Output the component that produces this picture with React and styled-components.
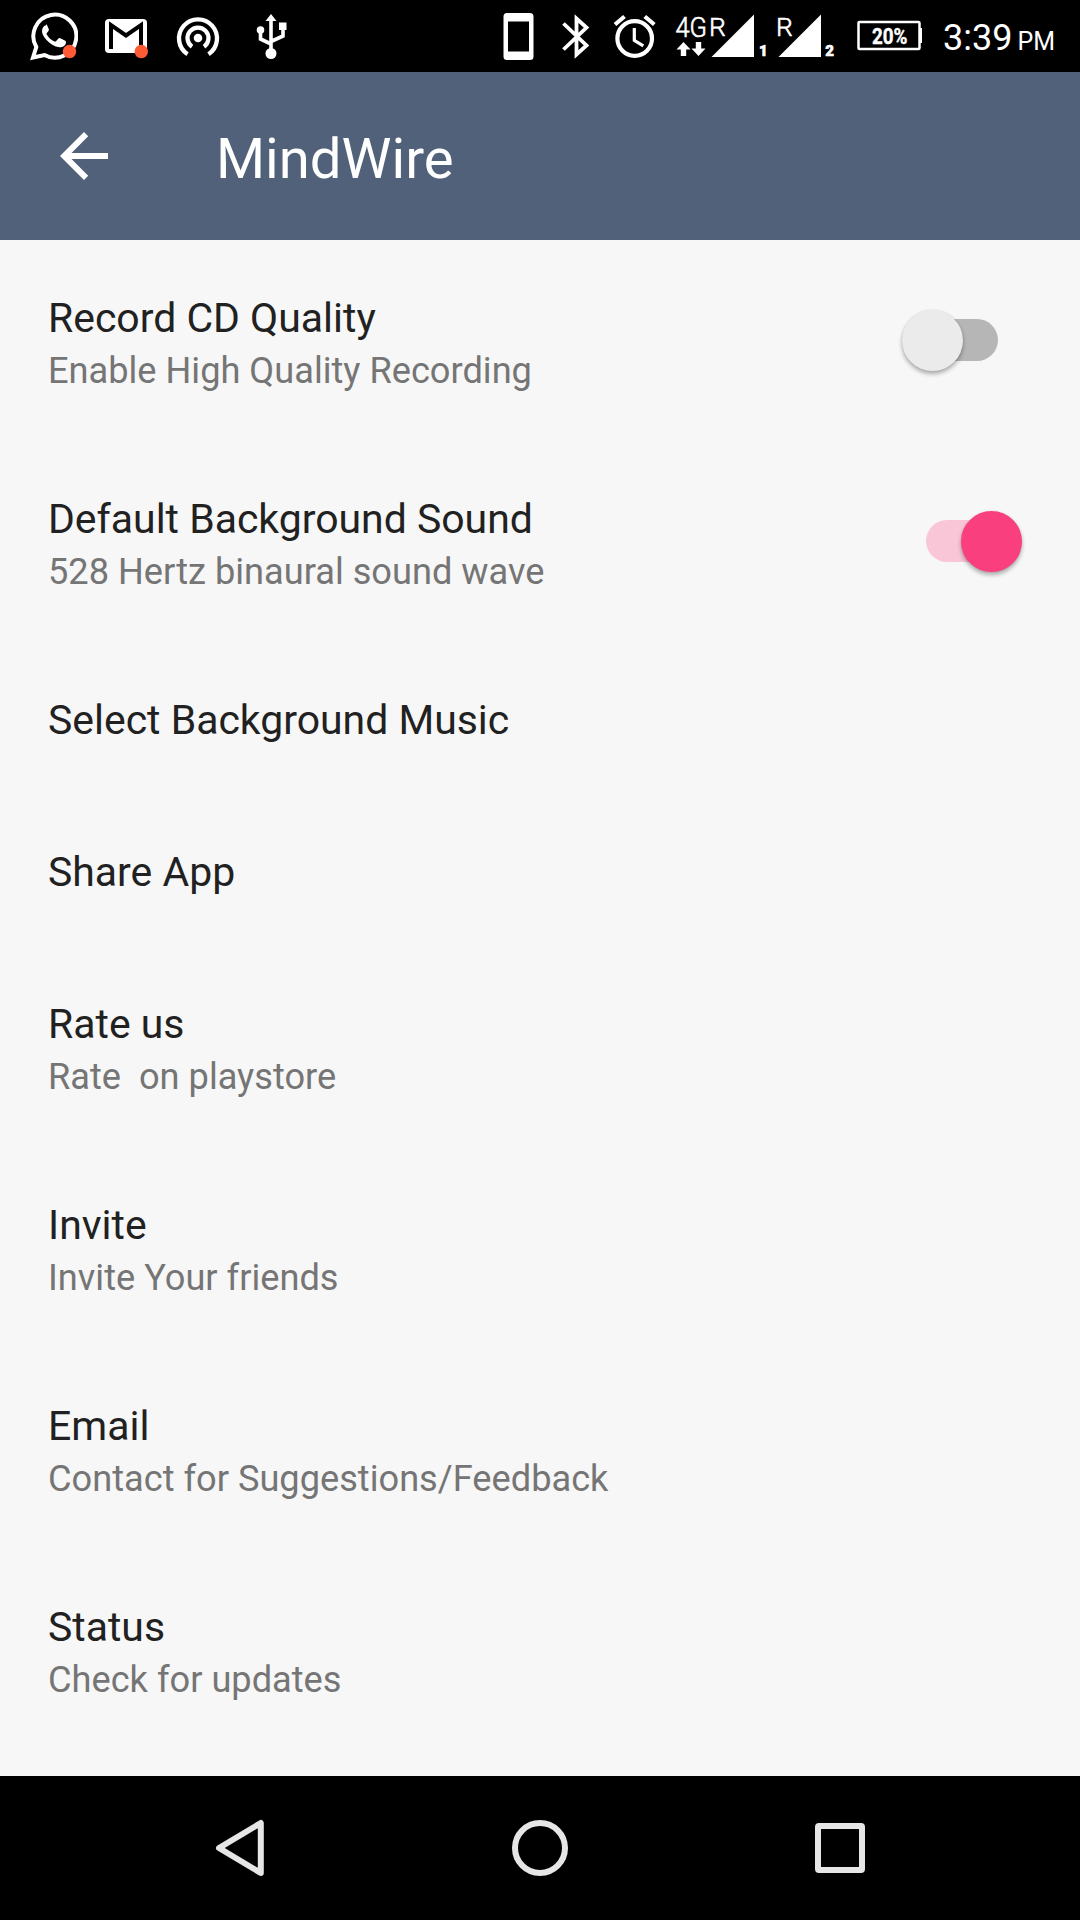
import { useState } from 'react';
import styled, { createGlobalStyle } from 'styled-components';

const GlobalStyle = createGlobalStyle`
  * {
    box-sizing: border-box;
  }

  body {
    margin: 0;
    background-color: #000;
    font-family: Roboto, 'Noto Sans', sans-serif;
  }
`;

const Screen = styled.div`
  width: 1080px;
  height: 1920px;
  display: flex;
  flex-direction: column;
  background-color: #f7f7f7;
  overflow: hidden;
`;

const StatusBar = styled.div`
  height: 72px;
  flex-shrink: 0;
  display: flex;
  align-items: center;
  justify-content: space-between;
  padding: 0 25px 0 28px;
  background-color: #000;
  color: #fff;
`;

const StatusGroup = styled.div`
  display: flex;
  align-items: center;
`;

const StatusIcon = styled.svg`
  display: block;
  width: ${(props) => props.$width}px;
  height: 72px;
  margin-right: ${(props) => props.$gap || 0}px;
`;

const Clock = styled.div`
  display: flex;
  align-items: baseline;
  justify-content: flex-end;
  gap: 5px;
  width: 113px;
  font-size: 36px;
  line-height: 44px;
  padding-top: 7px;
  white-space: nowrap;
`;

const Meridiem = styled.span`
  font-size: 25px;
`;

const AppBar = styled.header`
  height: 168px;
  flex-shrink: 0;
  display: flex;
  align-items: center;
  padding-left: 48px;
  background-color: #516179;
  color: #fff;
`;

const BackButton = styled.button`
  width: 72px;
  height: 72px;
  margin-right: 96px;
  padding: 0;
  border: none;
  background: none;
  cursor: pointer;
`;

const AppTitle = styled.h1`
  margin: 0;
  padding-top: 6px;
  font-size: 56.25px;
  font-weight: 400;
  line-height: 66px;
`;

const SettingsList = styled.main`
  flex: 1;
  display: flex;
  flex-direction: column;
`;

const SettingRow = styled.div`
  display: flex;
  align-items: center;
  justify-content: space-between;
  padding-right: 58px;
`;

const SettingText = styled.div`
  padding: 50px 0 46px 48px;
`;

const SettingTitle = styled.div`
  font-size: 40.95px;
  line-height: 56px;
  color: #212121;
`;

const SettingSummary = styled.div`
  font-size: 36.2px;
  line-height: 49px;
  color: #757575;
  white-space: pre;
`;

const Switch = styled.button`
  width: 120px;
  height: 60px;
  margin-bottom: 1px;
  display: flex;
  align-items: center;
  justify-content: center;
  position: relative;
  padding: 0;
  border: none;
  background: none;
  cursor: pointer;
`;

const SwitchTrack = styled.span`
  width: 72px;
  height: 42px;
  border-radius: 21px;
  background-color: ${(props) => (props.$on ? '#f9c6d8' : '#b6b6b6')};
`;

const SwitchThumb = styled.span`
  position: absolute;
  top: 0;
  left: ${(props) => (props.$on ? '59px' : '0')};
  width: 61px;
  height: 61px;
  border-radius: 50%;
  background-color: ${(props) => (props.$on ? '#fa3f7f' : '#ebebeb')};
  box-shadow: 0 3px 4px rgba(0, 0, 0, 0.3), 0 0 2px rgba(0, 0, 0, 0.1);
`;

const NavBar = styled.nav`
  height: 144px;
  flex-shrink: 0;
  display: flex;
  align-items: center;
  justify-content: center;
  gap: 210px;
  background-color: #000;
`;

const NavButton = styled.button`
  width: 90px;
  height: 90px;
  padding: 0;
  border: none;
  background: none;
  cursor: pointer;
`;

const SETTINGS = [
  { id: 'quality', title: 'Record CD Quality', summary: 'Enable High Quality Recording', toggle: true },
  { id: 'sound', title: 'Default Background Sound', summary: '528 Hertz binaural sound wave', toggle: true },
  { id: 'music', title: 'Select Background Music' },
  { id: 'share', title: 'Share App' },
  { id: 'rate', title: 'Rate us', summary: 'Rate  on playstore' },
  { id: 'invite', title: 'Invite', summary: 'Invite Your friends' },
  { id: 'email', title: 'Email', summary: 'Contact for Suggestions/Feedback' },
  { id: 'status', title: 'Status', summary: 'Check for updates' },
];

function WhatsAppIcon() {
  return (
    <StatusIcon $width={50} $gap={25} viewBox="28 0 50 72">
      <path d="M33 57.500l3.300-10.500a21.500 21.500 0 1 1 8.200 8z" fill="none" stroke="#fff" strokeWidth="4" />
      <path
        d="M46 25.200c-2 .4-4 2.600-4 5.800 0 3 1.600 5.600 4.300 8.700 3.600 4 8.100 7 13 7.500 3.500.2 6.500-1.700 6.700-4.800 0-1-.3-1.300-1.200-1.800l-4.500-2.300c-1-.5-1.500-.3-2.100.4l-2 2.400c-.5.6-1 .6-1.700.3-3.200-1.400-6-3.900-7.700-7-.4-.7-.2-1.200.3-1.700l1.500-1.900c.4-.5.4-1 .2-1.600l-2-4.700c-.2-.5-.5.500-.8.700z"
        fill="#fff"
      />
      <circle cx="69.500" cy="51.500" r="6.700" fill="#ff5a36" />
    </StatusIcon>
  );
}

function GmailIcon() {
  return (
    <StatusIcon $width={45} $gap={27} viewBox="103 0 45 72">
      <rect x="105" y="19" width="42" height="34" rx="4" fill="#fff" />
      <path d="M111 49V25l15 10.500L141 25v24" fill="none" stroke="#000" strokeWidth="4" />
      <circle cx="141.300" cy="51.500" r="6.700" fill="#ff5a36" />
    </StatusIcon>
  );
}

function HotspotIcon() {
  return (
    <StatusIcon $width={46} $gap={32} viewBox="175 0 46 72">
      <g fill="none" stroke="#fff" strokeWidth="4.300">
        <path d="M187.500 54.200a19 19 0 1 1 21 0" />
        <path d="M192 46.700a10.500 10.500 0 1 1 12 0" />
      </g>
      <circle cx="198" cy="38" r="4.300" fill="#fff" />
    </StatusIcon>
  );
}

function UsbIcon() {
  return (
    <StatusIcon $width={36} viewBox="253 0 36 72">
      <path d="M271 53V19M271 44l-10.500-5v-9M271 41.500l12-5.500v-9" fill="none" stroke="#fff" strokeWidth="3.600" />
      <path d="M271 14l5.500 7h-11zM279 22.500h7.500v7.500H279z" fill="#fff" />
      <circle cx="260.500" cy="30" r="3.800" fill="#fff" />
      <circle cx="271" cy="53.500" r="5.500" fill="#fff" />
    </StatusIcon>
  );
}

function PhoneIcon() {
  return (
    <StatusIcon $width={32} $gap={26} viewBox="503 0 32 72">
      <path
        fillRule="evenodd"
        d="M507 13h23q3.500 0 3.500 3.500v40q0 3.500-3.500 3.500h-23q-3.500 0-3.500-3.500v-40q0-3.500 3.500-3.500zM508 21.500v30h21v-30z"
        fill="#fff"
      />
    </StatusIcon>
  );
}

function BluetoothIcon() {
  return (
    <StatusIcon $width={30} $gap={21} viewBox="561 0 30 72">
      <path d="M563.500 23.500l23 22-10 9V18.500l10 9-23 22" fill="none" stroke="#fff" strokeWidth="3.800" />
    </StatusIcon>
  );
}

function AlarmIcon() {
  return (
    <StatusIcon $width={46} $gap={17} viewBox="612 0 46 72">
      <g fill="none" stroke="#fff">
        <circle cx="634.700" cy="38.500" r="17.300" strokeWidth="4.200" />
        <path d="M634.300 28v12.300l9 5.500" strokeWidth="3.200" />
        <path d="M615 24.500l9.500-8M654.300 24.500l-9.500-8" strokeWidth="4.200" />
      </g>
    </StatusIcon>
  );
}

function SignalIcons() {
  return (
    <StatusIcon $width={162} $gap={20} viewBox="675 0 162 72">
      <g fill="#fff" stroke="#fff" strokeWidth="0.600" fontFamily="Roboto, sans-serif" fontWeight="300">
        <text x="675.500" y="37.300" fontSize="27" textLength="31.500" lengthAdjust="spacingAndGlyphs">4G</text>
        <text x="708.900" y="35.900" fontSize="26.500">R</text>
        <text x="775.900" y="35.900" fontSize="26.500">R</text>
      </g>
      <g fill="#fff">
        <path d="M754 14.500V57h-42.500zM821 14.500V57h-42.500z" />
        <path d="M683.500 42l7 7.500h-4.300v6.500h-5.400v-6.500h-4.300zM698.500 56l7-7.500h-4.300V42h-5.400v6.500h-4.300z" />
      </g>
      <g fill="#fff" stroke="#fff" strokeWidth="0.600" fontFamily="Roboto, sans-serif" fontSize="15" fontWeight="900">
        <text x="759" y="55.800">1</text>
        <text x="825.300" y="55.800">2</text>
      </g>
    </StatusIcon>
  );
}

function BatteryIcon() {
  return (
    <StatusIcon $width={66} $gap={19} viewBox="857 0 66 72">
      <rect x="858.500" y="22" width="61" height="27" rx="1" fill="none" stroke="#fff" strokeWidth="2.500" />
      <path d="M919 28h3v15h-3z" fill="#fff" />
      <text
        x="872"
        y="44"
        fill="#fff"
        stroke="#fff"
        strokeWidth="0.400"
        fontFamily="Roboto, sans-serif"
        fontSize="22"
        fontWeight="700"
        textLength="35.500"
        lengthAdjust="spacingAndGlyphs"
      >
        20%
      </text>
    </StatusIcon>
  );
}

export default function App() {
  const [enabled, setEnabled] = useState({ quality: false, sound: true });

  const toggle = (id) => {
    setEnabled({ ...enabled, [id]: !enabled[id] });
  };

  return (
    <Screen>
      <GlobalStyle />
      <StatusBar>
        <StatusGroup>
          <WhatsAppIcon />
          <GmailIcon />
          <HotspotIcon />
          <UsbIcon />
        </StatusGroup>
        <StatusGroup>
          <PhoneIcon />
          <BluetoothIcon />
          <AlarmIcon />
          <SignalIcons />
          <BatteryIcon />
          <Clock>
            3:39 <Meridiem>PM</Meridiem>
          </Clock>
        </StatusGroup>
      </StatusBar>

      <AppBar>
        <BackButton aria-label="Back">
          <svg width="72" height="72" viewBox="0 0 72 72">
            <path d="M60 33v6H23.500l16.700 16.800L36 60 12 36l24-24 4.200 4.200L23.500 33z" fill="#fff" />
          </svg>
        </BackButton>
        <AppTitle>MindWire</AppTitle>
      </AppBar>

      <SettingsList>
        {SETTINGS.map((item) => (
          <SettingRow key={item.id}>
            <SettingText>
              <SettingTitle>{item.title}</SettingTitle>
              {item.summary && <SettingSummary>{item.summary}</SettingSummary>}
            </SettingText>
            {item.toggle && (
              <Switch role="switch" aria-checked={enabled[item.id]} aria-label={item.title} onClick={() => toggle(item.id)}>
                <SwitchTrack $on={enabled[item.id]} />
                <SwitchThumb $on={enabled[item.id]} />
              </Switch>
            )}
          </SettingRow>
        ))}
      </SettingsList>

      <NavBar>
        <NavButton aria-label="Back">
          <svg width="90" height="90" viewBox="0 0 90 90">
            <path d="M65.800 20v50L24 45z" fill="none" stroke="#e6e6e6" strokeWidth="6" strokeLinejoin="round" />
          </svg>
        </NavButton>
        <NavButton aria-label="Home">
          <svg width="90" height="90" viewBox="0 0 90 90">
            <circle cx="45" cy="45" r="25" fill="none" stroke="#e6e6e6" strokeWidth="6" />
          </svg>
        </NavButton>
        <NavButton aria-label="Recent apps">
          <svg width="90" height="90" viewBox="0 0 90 90">
            <rect x="23" y="23" width="44" height="44" rx="1" fill="none" stroke="#e6e6e6" strokeWidth="6" />
          </svg>
        </NavButton>
      </NavBar>
    </Screen>
  );
}
